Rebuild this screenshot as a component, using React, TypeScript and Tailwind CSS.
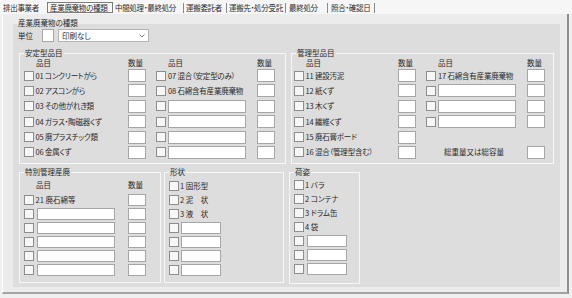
import React from 'react';

// 産業廃棄物の種類 tab page
type Right = string | 'input' | 'none' | 'total';

const Check: React.FC = () => (
  <span className="block shrink-0 w-[10px] h-[10px] border border-[#8e8e8e] bg-[#f7f7f7]" />
);

const Field: React.FC<{ className: string }> = ({ className }) => (
  <span className={`block shrink-0 border border-[#a6a6a6] bg-white ${className}`} />
);

const Group: React.FC<{ title: string; className: string; children?: React.ReactNode }> = ({ title, className, children }) => (
  <div className={`relative shrink-0 border border-[#f7f7f7] ${className}`}>
    <span className="absolute left-[4px] -top-[6px] px-[1px] leading-[10px] bg-[#dddddd] whitespace-nowrap">{title}</span>
    {children}
  </div>
);

const tabs = [
  { label: '中間処理・最終処分', w: 'w-[71px]', pl: 'pl-[2px]' },
  { label: '運搬委託者', w: 'w-[43px]', pl: 'pl-[2px]' },
  { label: '運搬先・処分受託', w: 'w-[59px]', pl: 'pl-[2px]' },
  { label: '最終処分', w: 'w-[42px]', pl: 'pl-[3px]' },
  { label: '照合・確認日', w: 'w-[47px]', pl: 'pl-[3px]' },
];

const anteiLeft = ['01 コンクリートがら', '02 アスコンがら', '03 その他がれき類', '04 ガラス・陶磁器くず', '05 廃プラスチック類', '06 金属くず'];
const anteiRight: Right[] = ['07 混合（安定型のみ）', '08 石綿含有産業廃棄物', 'input', 'input', 'input', 'input'];
const kanriLeft = ['11 建設汚泥', '12 紙くず', '13 木くず', '14 繊維くず', '15 廃石膏ボード', '16 混合（管理型含む）'];
const kanriRight: Right[] = ['17 石綿含有産業廃棄物', 'input', 'input', 'input', 'none', 'total'];
const tokubetsu = ['21 廃石綿等', '', '', '', '', ''];
const keijo = ['1 固形型', '2 泥　状', '3 液　状', '', '', '', ''];
const nisugata = ['1 バラ', '2 コンテナ', '3 ドラム缶', '4 袋', '', '', ''];

const HeaderRow: React.FC = () => (
  <div className="flex items-center h-[10px] leading-[10px]">
    <span className="w-[104px] pl-[12px]">品目</span>
    <span className="w-[18px] whitespace-nowrap">数量</span>
    <span className="ml-[10px] w-[101px] pl-[12px]">品目</span>
    <span className="w-[18px] whitespace-nowrap">数量</span>
  </div>
);

const ItemTable: React.FC<{ left: string[]; right: Right[] }> = ({ left, right }) => (
  <>
    <HeaderRow />
    <div className="mt-[1px] flex flex-col gap-[2.4px]">
      {left.map((label, i) => {
        const r = right[i];
        return (
          <div key={label} className="flex items-center h-[13px]">
            <div className="w-[104px] flex items-center gap-[1.5px]">
              <Check />
              <span className="whitespace-nowrap leading-[10px] tracking-[-0.2px]">{label}</span>
            </div>
            <Field className="w-[18px] h-[13px]" />
            {r === 'none' ? null : r === 'total' ? (
              <>
                <span className="ml-[10px] w-[101px] pl-[18px] whitespace-nowrap leading-[10px]">総重量又は総容量</span>
                <Field className="w-[18px] h-[13px]" />
              </>
            ) : (
              <>
                <div className="ml-[10px] w-[101px] flex items-center gap-[2px]">
                  <Check />
                  {r === 'input' ? (
                    <Field className="w-[78px] h-[13px]" />
                  ) : (
                    <span className="whitespace-nowrap leading-[10px] tracking-[-0.2px]">{r}</span>
                  )}
                </div>
                <Field className="w-[18px] h-[13px]" />
              </>
            )}
          </div>
        );
      })}
    </div>
  </>
);

const CheckList: React.FC<{ items: string[]; gap: string; ml: string }> = ({ items, gap, ml }) => (
  <div className="flex flex-col gap-[2px]">
    {items.map((label, i) => (
      <div key={i} className={`flex items-center h-[12px] ${gap}`}>
        <Check />
        {label ? (
          <span className="whitespace-nowrap leading-[10px]">{label}</span>
        ) : (
          <Field className={`w-[40px] h-[12px] ${ml}`} />
        )}
      </div>
    ))}
  </div>
);

const App: React.FC = () => {
  return (
    <div className="w-[572px] h-[298px] overflow-hidden bg-[#f0f0f0] text-[7.5px] text-[#2a2a2a] font-['Noto_Sans_CJK_JP','Noto_Sans',sans-serif] [font-feature-settings:'palt']">
      {/* Tab strip */}
      <div className="flex items-center h-[14px] pt-[1px] bg-[#f6f6f6] leading-[10px] tracking-[-0.3px]">
        <span className="w-[47px] pl-[3px] whitespace-nowrap">排出事業者</span>
        <span className="w-[66px] h-[11px] flex items-center pl-[2px] border border-[#7c7c7c] bg-[#fafafa] whitespace-nowrap">産業廃棄物の種類</span>
        {tabs.map((t) => (
          <span key={t.label} className={`${t.w} ${t.pl} h-[10px] border-r border-[#8a8a8a] whitespace-nowrap`}>
            {t.label}
          </span>
        ))}
      </div>

      {/* Tab page */}
      <div className="ml-[2px] w-[567px] h-[280px] pt-[10px] pl-[10px] bg-[#ececec] border-l border-white border-r-2 border-r-[#8f8f8f] border-b-2 border-b-[#a3a3a3]">
        <div className="relative w-[547px] h-[263px] bg-[#dddddd] pt-[5px] pl-[6px]">
          <span className="absolute left-[4px] -top-[6px] px-[1px] leading-[10px] whitespace-nowrap">産業廃棄物の種類</span>

          {/* 単位 */}
          <div className="flex items-center h-[13px] -ml-[1px]">
            <span className="w-[24px] leading-[10px]">単位</span>
            <Field className="w-[12px] h-[13px]" />
            <div className="ml-[4px] w-[91px] h-[13px] flex items-center justify-between pl-[3px] pr-[3px] border border-[#b4b4b4] bg-white">
              <span className="leading-[10px] whitespace-nowrap">印刷なし</span>
              <svg width="6" height="4" viewBox="0 0 6 4" fill="none" stroke="#7a7a7a" strokeWidth="1">
                <path d="M0.5 0.5 L3 3 L5.5 0.5" />
              </svg>
            </div>
          </div>

          {/* 安定型 / 管理型 */}
          <div className="mt-[11px] flex gap-[5px]">
            <Group title="安定型品目" className="w-[267px] h-[111px] pt-[4px] pl-[4px]">
              <ItemTable left={anteiLeft} right={anteiRight} />
            </Group>
            <Group title="管理型品目" className="w-[263px] h-[111px] pt-[4px] pl-[2px]">
              <ItemTable left={kanriLeft} right={kanriRight} />
            </Group>
          </div>

          {/* 特別管理 / 形状 / 荷姿 */}
          <div className="mt-[8px] flex">
            <Group title="特別管理産廃" className="w-[142px] h-[111px] pt-[7px] pl-[4px]">
              <div className="flex items-center h-[10px] leading-[10px]">
                <span className="w-[104px] pl-[12px]">品目</span>
                <span className="whitespace-nowrap">数量</span>
              </div>
              <div className="mt-[4px] flex flex-col gap-[2px]">
                {tokubetsu.map((label, i) => (
                  <div key={i} className="flex items-center h-[12px]">
                    <div className="w-[104px] flex items-center gap-[1.5px]">
                      <Check />
                      {label ? (
                        <span className="whitespace-nowrap leading-[10px]">{label}</span>
                      ) : (
                        <Field className="ml-[1.5px] w-[78px] h-[12px]" />
                      )}
                    </div>
                    <Field className="w-[18px] h-[12px]" />
                  </div>
                ))}
              </div>
            </Group>
            <Group title="形状" className="ml-[3px] w-[120px] h-[111px] pt-[7px] pl-[4px]">
              <CheckList items={keijo} gap="gap-[1px]" ml="ml-[1px]" />
            </Group>
            <Group title="荷姿" className="ml-[5px] w-[71px] h-[112px] pt-[6px] pl-[4px]">
              <CheckList items={nisugata} gap="gap-[1px]" ml="ml-[2px]" />
            </Group>
          </div>
        </div>
      </div>
    </div>
  );
};

export default App;
